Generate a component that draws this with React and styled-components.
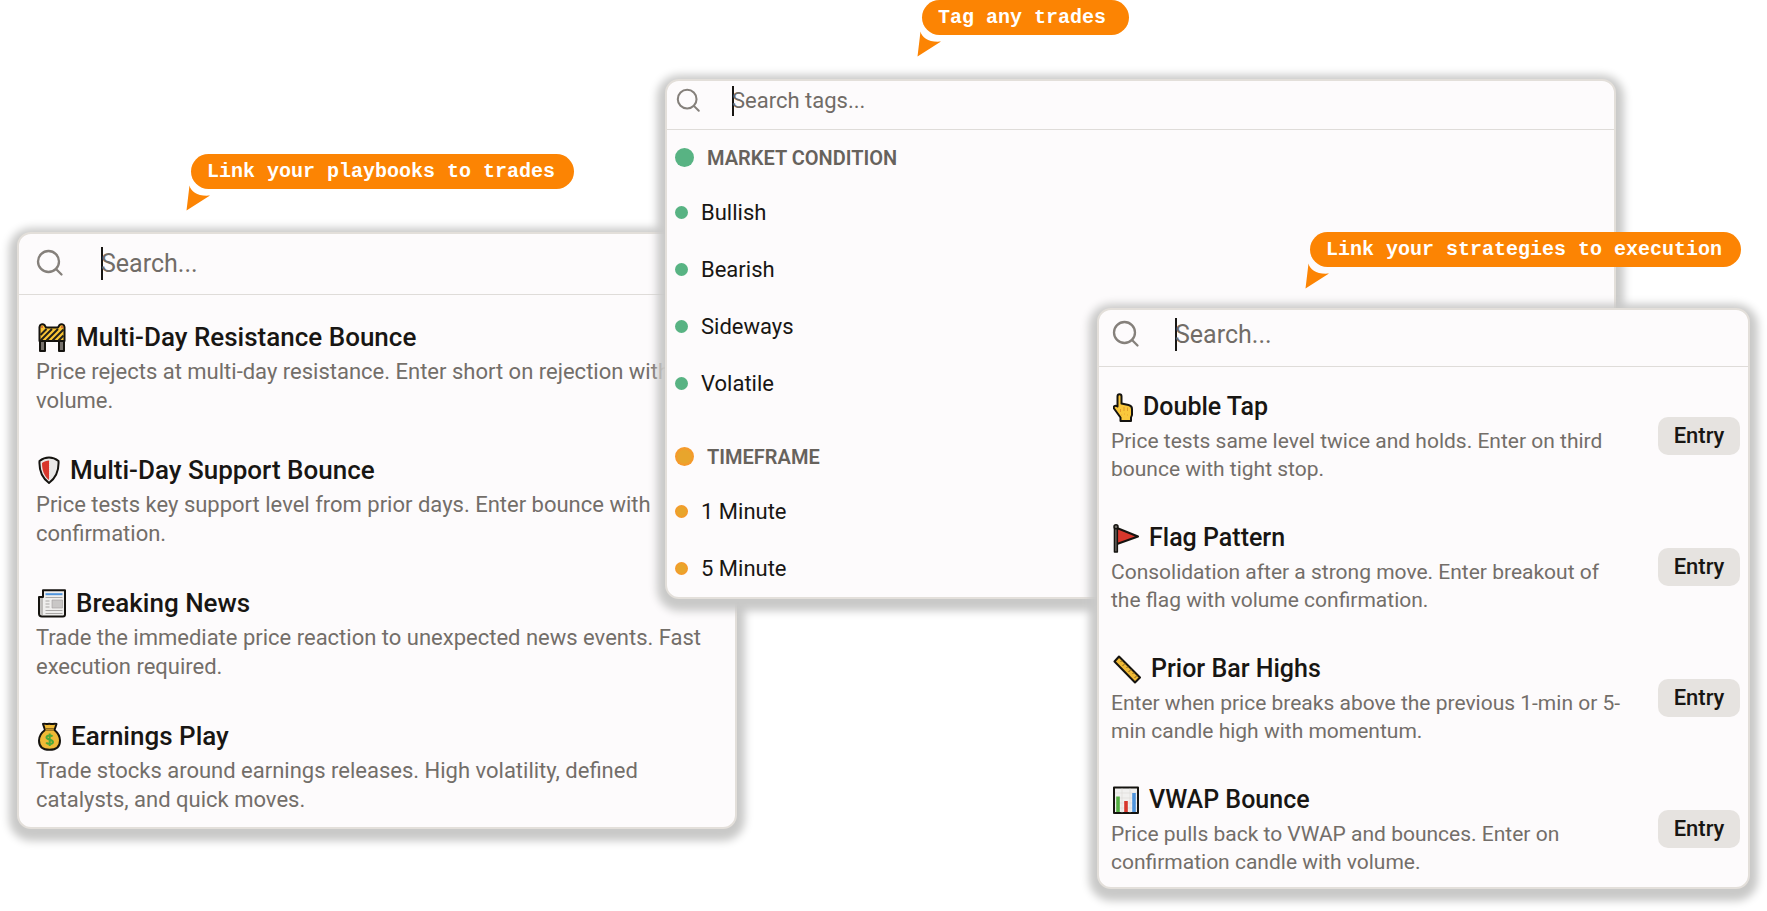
import React from "react";
import styled, { createGlobalStyle } from "styled-components";

const GlobalStyle = createGlobalStyle`
  *, *::before, *::after { box-sizing: border-box; }
  body {
    margin: 0;
    background: #ffffff;
    color: #181613;
    font-family: Roboto, "Liberation Sans", sans-serif;
  }
  ul { list-style: none; margin: 0; padding: 0; }
  h2, h3, p { margin: 0; }
`;

const Stage = styled.main`
  display: grid;
  grid-template-columns:
    minmax(0, 17fr) minmax(0, 648fr) minmax(0, 72fr) minmax(0, 360fr)
    minmax(0, 519fr) minmax(0, 134fr) minmax(0, 17fr);
  align-items: start;
  min-height: 100vh;
`;

const Feature = styled.section`
  grid-row: 1;
  grid-column: ${(p) => p.$columns};
  padding-top: ${(p) => p.$top}px;
  display: flex;
  flex-direction: column;
  align-items: stretch;
  gap: ${(p) => p.$gap}px;
  min-width: 0;
`;

const Callout = styled.div`
  position: relative;
  align-self: flex-start;
  margin-left: ${(p) => p.$indent}px;
  min-width: 207px;
  height: 35px;
  padding: 0 19px 0 16px;
  border-radius: 18px;
  background: #fc8403;
  color: #ffffff;
  font: bold 20px/36px "Liberation Mono", monospace;
  white-space: nowrap;
`;

const Tail = styled.svg`
  position: absolute;
  left: -5px;
  top: 31px;
  width: 25px;
  height: 26px;
  fill: #fc8403;
`;

const Panel = styled.div`
  border: 2px solid #e3dfda;
  border-radius: 14px;
  background: #fdfbfc;
  box-shadow: 0 4px 8px 8px #c9c9c8;
`;

const SearchRow = styled.label`
  display: flex;
  align-items: center;
  height: ${(p) => p.$height}px;
  padding: 0 16px ${(p) => p.$lift}px ${(p) => p.$inset}px;
  border-bottom: 1px solid #dfdcd9;
`;

const SearchGlyph = styled.svg`
  flex: none;
  width: ${(p) => p.$size}px;
  height: ${(p) => p.$size}px;
  margin-right: ${(p) => p.$gap}px;
  fill: none;
  stroke: #85807b;
  stroke-width: 2.3;
  stroke-linecap: round;
`;

const SearchInput = styled.input`
  flex: 1;
  min-width: 0;
  height: ${(p) => p.$height}px;
  padding: 0;
  border: 0;
  outline: 0;
  background: linear-gradient(#181613, #181613) left / 2px 100% no-repeat;
  color: #181613;
  font: 400 ${(p) => p.$size}px Roboto, "Liberation Sans", sans-serif;
  &::placeholder { color: #716c67; opacity: 1; }
`;

const SetupList = styled.ul`
  display: flex;
  flex-direction: column;
  gap: 37px;
  padding: ${(p) => p.$padding};
`;

const SetupRow = styled.li`
  display: flex;
  align-items: center;
  justify-content: space-between;
  gap: 12px;
`;

const SetupTitle = styled.h3`
  display: flex;
  align-items: center;
  gap: 10px;
  height: 36px;
  padding-left: 2px;
  font-size: ${(p) => p.$size}px;
  font-weight: 500;
  line-height: 36px;
  white-space: nowrap;
`;

const SetupText = styled.p`
  margin-top: 2px;
  color: #736e69;
  font-size: ${(p) => p.$size}px;
  line-height: ${(p) => p.$line}px;
  white-space: pre-line;
`;

const Badge = styled.span`
  flex: none;
  width: 82px;
  height: 38px;
  border-radius: 10px;
  background: #e6e3e0;
  font-size: 22px;
  font-weight: 500;
  line-height: 38px;
  text-align: center;
`;

const TagGroups = styled.div`
  display: flex;
  flex-direction: column;
  gap: 18px;
  padding: 1px 8px 0;
`;

const GroupTitle = styled.h3`
  display: flex;
  align-items: center;
  gap: 13px;
  height: 53px;
  color: #67625c;
  font-size: 20px;
  font-weight: 600;
`;

const TagRow = styled.li`
  display: flex;
  align-items: center;
  gap: 7px;
  height: 57px;
  font-size: 22px;
`;

const Dot = styled.span`
  flex: none;
  width: ${(p) => p.$size}px;
  height: ${(p) => p.$size}px;
  margin-right: ${(p) => (p.$size < 19 ? 6 : 0)}px;
  border-radius: 50%;
  background: ${(p) =>
    p.$tone === "green"
      ? "#58b383"
      : "radial-gradient(circle, #e8a52c 0 45%, #f59a2b 60%)"};
`;

const Art = styled.svg`
  flex: none;
  display: block;
  height: 29px;
  stroke-linejoin: round;
`;

const Barrier = () => (
  <Art width="28" viewBox="0 0 28 29" aria-hidden="true">
    <path d="M2 17h5v11H2zM21 17h5v11h-5z" fill="#77726d" stroke="#15130f" strokeWidth="2" />
    <path d="M1.500 6V4a3 3 0 0 1 5-2l1.500 2.500h12L21.500 2a3 3 0 0 1 5 2v14h-25z" fill="#fbc534" stroke="#15130f" strokeWidth="2" />
    <path d="M2.500 12l6-6M2.500 17.500L14 6M8.500 17.500L20 6M14.500 17.500L25.500 6.500M20.500 17.500l5-5" stroke="#24211a" strokeWidth="2" />
    <circle cx="4" cy="4" r="1" fill="#d4573b" />
    <circle cx="24" cy="4" r="1" fill="#d4573b" />
  </Art>
);

const Shield = () => (
  <Art width="22" viewBox="0 0 22 29" aria-hidden="true">
    <path d="M11 1.500C8 1.500 4 3 1.500 5c-.5 9 2.500 17 9.500 22 7-5 10-13 9.500-22C18 3 14 1.500 11 1.500z" fill="#e9e8e7" stroke="#15130f" strokeWidth="2" />
    <path d="M11 4.500C8.500 4.500 6 5.500 4 7c0 7 2 13 7 17z" fill="#d7372c" />
    <path d="M11.500 5v18" stroke="#f6d5d1" strokeWidth="1" strokeDasharray="1 1" />
  </Art>
);

const Newspaper = () => (
  <Art width="28" viewBox="0 0 28 29" aria-hidden="true">
    <path d="M5 1.200h22v24.300a2 2 0 0 1-2 2H4a3 3 0 0 1-3-3V8h4z" fill="#efeeed" stroke="#15130f" strokeWidth="2" />
    <path d="M2.200 9H5v17H4a2 2 0 0 1-1.800-2z" fill="#bdbbb9" />
    <path d="M7.500 5.200h17" stroke="#4f94dc" strokeWidth="2" />
    <path d="M7.500 8.500h17M7.500 12h4M7.500 15h4M7.500 18h4M7.500 21.500h17M7.500 24.500h17" stroke="#aaa8a6" strokeWidth="1" />
    <path d="M14 11h10.500v8H14z" fill="#c9c7c6" stroke="#a19f9d" strokeWidth=".6" />
  </Art>
);

const MoneyBag = () => (
  <Art width="23" viewBox="0 0 23 29" aria-hidden="true">
    <path d="M5 2c2-1 3 .5 4.500 0s2-.5 3.500 0 3-.8 5.500 0l-2 6c3.500 3 5.500 6 5.500 10.500 0 6-4 9.300-10.500 9.300S1 24.500 1 18.500C1 14 3 11 7 8z" fill="#efb936" stroke="#15130f" strokeWidth="2" />
    <path d="M7 6.500h9M7 8.200h9" stroke="#8c6a20" strokeWidth="1.200" />
    <path d="M14.500 14.500c-1-1.500-6-1.500-6 1 0 2.800 6.500 1.500 6.500 4.500 0 2.500-5.500 2.500-6.800.5M11.700 11.500v12.500" fill="none" stroke="#4da83a" strokeWidth="2" />
  </Art>
);

const Finger = () => (
  <Art width="20" viewBox="0 0 20 29" aria-hidden="true">
    <path d="M4.500 3.500c0-3 4-3 4 0v7l7 1.500c2.500.5 3.500 1.500 3.500 4v6l-1 2.500V28H7.500v-3.500L1 15.500c-1-2 1-3.500 3.500-2z" fill="#fac83c" stroke="#15130f" strokeWidth="2" />
    <path d="M7.500 16v3M11 14v4M14.500 14.500v3.500M8 22h.8M11 21h.8M14 22h.8" stroke="#e29a2b" strokeWidth="1" />
  </Art>
);

const Flag = () => (
  <Art width="26" viewBox="0 0 26 29" aria-hidden="true">
    <path d="M4 4l21 8.500L4 20z" fill="#d7372c" stroke="#15130f" strokeWidth="2" />
    <path d="M1.500 4h2.800v24H1.500z" fill="#77726d" stroke="#15130f" strokeWidth="1.600" />
    <circle cx="3" cy="2.800" r="2" fill="#77726d" stroke="#15130f" strokeWidth="1.500" />
  </Art>
);

const Ruler = () => (
  <Art width="28" viewBox="0 0 28 29" aria-hidden="true">
    <path d="M6 1.500L27 22.500l-5 5L1.500 6.500z" fill="#efb936" stroke="#15130f" strokeWidth="2" />
    <path d="M9 5.500l-1.500 1.500M12 8.500l-2.500 2.500M15 11.500L13.500 13M18 14.500l-2.500 2.500M21 17.500l-1.500 1.500M24 20.500L21.500 23" stroke="#80601c" strokeWidth="1" />
  </Art>
);

const Chart = () => (
  <Art width="26" viewBox="0 0 26 29" aria-hidden="true">
    <path d="M1 1.500h24v25.500H1z" fill="#f1f0ef" stroke="#15130f" strokeWidth="2" />
    <path d="M2 7h22M2 12h22M2 17h22M2 22h22M9 2.500v24M17 2.500v24" stroke="#dedcda" strokeWidth=".7" />
    <path d="M3.200 10.500h3.600V26H3.200z" fill="#54ae43" />
    <path d="M11.200 15h3.600v11h-3.600z" fill="#d7372c" />
    <path d="M19.200 7h3.600v19h-3.600z" fill="#4f94dc" />
  </Art>
);

const playbooks = [
  { art: Barrier, title: "Multi-Day Resistance Bounce", text: "Price rejects at multi-day resistance. Enter short on rejection with\nvolume." },
  { art: Shield, title: "Multi-Day Support Bounce", text: "Price tests key support level from prior days. Enter bounce with\nconfirmation." },
  { art: Newspaper, title: "Breaking News", text: "Trade the immediate price reaction to unexpected news events. Fast\nexecution required." },
  { art: MoneyBag, title: "Earnings Play", text: "Trade stocks around earnings releases. High volatility, defined\ncatalysts, and quick moves." },
];

const strategies = [
  { art: Finger, title: "Double Tap", text: "Price tests same level twice and holds. Enter on third\nbounce with tight stop." },
  { art: Flag, title: "Flag Pattern", text: "Consolidation after a strong move. Enter breakout of\nthe flag with volume confirmation." },
  { art: Ruler, title: "Prior Bar Highs", text: "Enter when price breaks above the previous 1-min or 5-\nmin candle high with momentum." },
  { art: Chart, title: "VWAP Bounce", text: "Price pulls back to VWAP and bounces. Enter on\nconfirmation candle with volume." },
];

const tagGroups = [
  { name: "MARKET CONDITION", tone: "green", tags: ["Bullish", "Bearish", "Sideways", "Volatile"] },
  { name: "TIMEFRAME", tone: "orange", tags: ["1 Minute", "5 Minute"] },
];

const Bubble = ({ indent, children }) => (
  <Callout $indent={indent}>
    {children}
    <Tail viewBox="0 0 25 26" aria-hidden="true">
      <path d="M3.500.5C5 7 12 11.500 24 10.500L.5 25.500z" />
    </Tail>
  </Callout>
);

const Search = ({ height, lift, inset, icon, gap, caret, size, placeholder }) => (
  <SearchRow $height={height} $lift={lift} $inset={inset}>
    <SearchGlyph $size={icon} $gap={gap} viewBox="0 0 28 28" aria-hidden="true">
      <circle cx="12.500" cy="12.500" r="10.500" />
      <path d="M20 20L25.500 25.500" />
    </SearchGlyph>
    <SearchInput type="text" aria-label={placeholder} placeholder={placeholder} $height={caret} $size={size} />
  </SearchRow>
);

const Setup = ({ item, titleSize, textSize, line, badge }) => (
  <SetupRow>
    <div>
      <SetupTitle $size={titleSize}><item.art />{item.title}</SetupTitle>
      <SetupText $size={textSize} $line={line}>{item.text}</SetupText>
    </div>
    {badge && <Badge>{badge}</Badge>}
  </SetupRow>
);

export default function App() {
  return (
    <>
      <GlobalStyle />
      <Stage>
        <Feature $columns="2 / 4" $top={154} $gap={43}>
          <Bubble indent={174}>Link your playbooks to trades</Bubble>
          <Panel>
            <Search height={61} lift={2} inset={17} icon={28} gap={37} caret={33} size={25} placeholder="Search..." />
            <SetupList $padding="24px 12px 13px 17px">
              {playbooks.map((item) => (
                <Setup key={item.title} item={item} titleSize={26} textSize={22} line={29} />
              ))}
            </SetupList>
          </Panel>
        </Feature>

        <Feature $columns="3 / 6" $top={0} $gap={44}>
          <Bubble indent={257}>Tag any trades</Bubble>
          <Panel>
            <Search height={49} lift={9} inset={9} icon={25} gap={31} caret={30} size={22} placeholder="Search tags..." />
            <TagGroups>
              {tagGroups.map((group) => (
                <div key={group.name}>
                  <GroupTitle><Dot $size={19} $tone={group.tone} />{group.name}</GroupTitle>
                  <ul>
                    {group.tags.map((tag) => (
                      <TagRow key={tag}><Dot $size={13} $tone={group.tone} />{tag}</TagRow>
                    ))}
                  </ul>
                </div>
              ))}
            </TagGroups>
          </Panel>
        </Feature>

        <Feature $columns="5 / 7" $top={232} $gap={41}>
          <Bubble indent={213}>Link your strategies to execution</Bubble>
          <Panel>
            <Search height={57} lift={8} inset={13} icon={28} gap={35} caret={33} size={25} placeholder="Search..." />
            <SetupList $padding="22px 8px 11px 12px">
              {strategies.map((item) => (
                <Setup key={item.title} item={item} titleSize={25} textSize={21} line={28} badge="Entry" />
              ))}
            </SetupList>
          </Panel>
        </Feature>
      </Stage>
    </>
  );
}
